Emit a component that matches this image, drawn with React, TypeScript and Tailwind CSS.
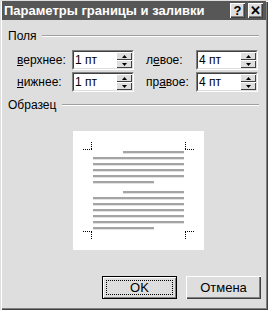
import React from "react";

const font = { fontFamily: '"Liberation Sans", Arial, sans-serif' };

function Arrow({ up }: { up: boolean }) {
  return (
    <svg width="5" height="3" viewBox="0 0 5 3">
      {up ? <polygon points="0,3 5,3 2.5,0" fill="#000" /> : <polygon points="0,0 5,0 2.5,3" fill="#000" />}
    </svg>
  );
}

function Spin({ value }: { value: string }) {
  return (
    <div className="w-[62px] h-[20px] flex border border-t-[#808080] border-l-[#808080] border-b-white border-r-white">
      <div className="flex-1 flex border border-t-[#404040] border-l-[#404040] border-b-[#dedede] border-r-[#dedede] bg-white">
        <div className="flex-1 flex items-center pl-[1px] text-[12px] text-black leading-none">{value}</div>
        <div className="w-[16px] flex flex-col">
          <div className="h-[8px] flex items-center justify-center bg-[#dedede] shadow-[inset_1px_1px_0_#fff,inset_-1px_-1px_0_#404040]">
            <Arrow up />
          </div>
          <div className="h-[8px] flex items-center justify-center bg-[#dedede] shadow-[inset_1px_1px_0_#fff,inset_-1px_-1px_0_#404040]">
            <Arrow up={false} />
          </div>
        </div>
      </div>
    </div>
  );
}

function Group({ label, lineMl }: { label: string; lineMl: string }) {
  return (
    <div className="flex items-center h-[13px] pl-[6px] pr-[7px]">
      <span className="text-[12px] text-black leading-none">{label}</span>
      <div className={`flex-1 h-[2px] border-t border-t-[#a0a0a0] border-b border-b-white ${lineMl}`} />
    </div>
  );
}

function Preview() {
  const lines: { y: number; x1: number; x2: number }[] = [];
  const p1 = [151, 157, 163, 169, 175, 181];
  const p2 = [191, 197, 203, 209, 215, 221, 227];
  const add = (arr: number[]) =>
    arr.forEach((y, i) => {
      const ry = y - 131;
      if (i === 0) lines.push({ y: ry, x1: 50, x2: 111 });
      else if (i === arr.length - 1) lines.push({ y: ry, x1: 20, x2: 81 });
      else lines.push({ y: ry, x1: 20, x2: 111 });
    });
  add(p1);
  add(p2);
  return (
    <div className="w-[131px] h-[119px] bg-white ml-[71px] mt-[20px]">
      <svg width="131" height="119" viewBox="0 0 131 119">
        {lines.map((l, i) => (
          <rect key={i} x={l.x1} y={l.y} width={l.x2 - l.x1} height={2.3} fill="#a4a4a4" />
        ))}
        <g stroke="#000" strokeWidth="1" strokeDasharray="1 1" fill="none">
          <line x1="10" y1="18.5" x2="19" y2="18.5" />
          <line x1="18.5" y1="11" x2="18.5" y2="18" />
          <line x1="112" y1="18.5" x2="121" y2="18.5" />
          <line x1="112.5" y1="11" x2="112.5" y2="18" />
          <line x1="10" y1="100.5" x2="19" y2="100.5" />
          <line x1="18.5" y1="101" x2="18.5" y2="109" />
          <line x1="112" y1="100.5" x2="121" y2="100.5" />
          <line x1="112.5" y1="101" x2="112.5" y2="109" />
        </g>
      </svg>
    </div>
  );
}

function TitleBtn({ children }: { children: React.ReactNode }) {
  return (
    <div className="w-[15px] h-[15px] bg-[#dedede] flex items-center justify-center text-[13px] font-bold text-black leading-none shadow-[inset_1px_1px_0_#fff,inset_-1px_-1px_0_#404040,inset_-2px_-2px_0_#808080]">
      {children}
    </div>
  );
}

export default function App() {
  return (
    <div
      className="w-[268px] h-[310px] bg-[#dedede] flex flex-col p-[2px] shadow-[inset_1px_1px_0_#dedede,inset_2px_2px_0_#fff,inset_-1px_-1px_0_#404040,inset_-2px_-2px_0_#808080]"
      style={font}
    >
      <div className="h-[19px] bg-[#575757] flex items-center pl-[2px] pr-[3px] mt-[-1px]">
        <span className="flex-1 text-white font-bold text-[13px] leading-none whitespace-nowrap">
          Параметры границы и заливки
        </span>
        <div className="flex gap-[3px]">
          <TitleBtn>?</TitleBtn>
          <TitleBtn>✕</TitleBtn>
        </div>
      </div>

      <div className="mt-[9px]">
        <Group label="Поля" lineMl="ml-[5px]" />
      </div>

      <div className="flex flex-col gap-[2px] mt-[8px] pl-[15px]">
        <div className="flex items-center">
          <span className="w-[55px] text-[12px] text-black">
            <span className="underline">в</span>ерхнее:
          </span>
          <Spin value="1 пт" />
          <span className="w-[50px] ml-[12px] text-[12px] text-black">
            л<span className="underline">е</span>вое:
          </span>
          <Spin value="4 пт" />
        </div>
        <div className="flex items-center">
          <span className="w-[55px] text-[12px] text-black">
            <span className="underline">н</span>ижнее:
          </span>
          <Spin value="1 пт" />
          <span className="w-[50px] ml-[12px] text-[12px] text-black">
            пр<span className="underline">а</span>вое:
          </span>
          <Spin value="4 пт" />
        </div>
      </div>

      <div className="mt-[6px]">
        <Group label="Образец" lineMl="ml-[6px]" />
      </div>

      <Preview />

      <div className="flex justify-end gap-[9px] pr-[5px] mt-[26px]">
        <div className="w-[75px] h-[23px] border border-black bg-[#dedede] shadow-[inset_1px_1px_0_#fff,inset_-1px_-1px_0_#808080] p-[3px]">
          <div className="w-full h-full border border-dotted border-black flex items-center justify-center text-[13px] text-black leading-none">
            OK
          </div>
        </div>
        <div className="w-[75px] h-[23px] bg-[#dedede] flex items-center justify-center text-[13px] text-black leading-none shadow-[inset_1px_1px_0_#fff,inset_-1px_-1px_0_#404040,inset_-2px_-2px_0_#808080]">
          Отмена
        </div>
      </div>
    </div>
  );
}
